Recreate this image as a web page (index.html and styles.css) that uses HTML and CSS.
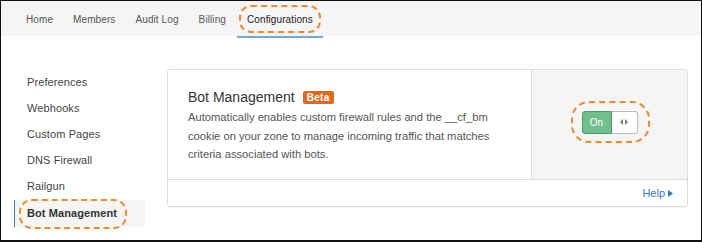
FILE: index.html
```html
<!DOCTYPE html>
<html lang="en">
<head>
  <meta charset="UTF-8">
  <title>Configurations</title>
  <link rel="stylesheet" href="styles.css">
</head>
<body>
  <div class="frame">
    <div class="tabs">
      <a class="tab">Home</a>
      <a class="tab">Members</a>
      <a class="tab">Audit Log</a>
      <a class="tab">Billing</a>
      <a class="tab active">Configurations<span class="callout callout-tab"></span></a>
    </div>

    <div class="main">
      <ul class="sidebar">
        <li>Preferences</li>
        <li>Webhooks</li>
        <li>Custom Pages</li>
        <li>DNS Firewall</li>
        <li>Railgun</li>
        <li class="active">Bot Management<span class="callout callout-side"></span></li>
      </ul>

      <div class="card">
        <div class="card-body">
          <div class="card-text">
            <h2>Bot Management <span class="badge">Beta</span></h2>
            <p>Automatically enables custom firewall rules and the __cf_bm cookie on your zone to manage incoming traffic that matches criteria associated with bots.</p>
          </div>
          <div class="card-control">
            <div class="toggle">
              <span class="toggle-on">On</span>
              <span class="toggle-off">
                <svg width="8" height="6" viewBox="0 0 8 6"><path d="M3 0 L0 3 L3 6 Z M5 0 L8 3 L5 6 Z" fill="#777"/></svg>
              </span>
              <span class="callout callout-toggle"></span>
            </div>
          </div>
        </div>
        <div class="card-footer">
          <a class="help">Help <svg width="5" height="7" viewBox="0 0 5 7"><path d="M0 0 L5 3.5 L0 7 Z" fill="#2f7bbf"/></svg></a>
        </div>
      </div>
    </div>
  </div>
</body>
</html>
```

FILE: styles.css
```css
/* page */
body {
  margin: 0;
  font-family: "Liberation Sans", Arial, sans-serif;
  color: #404040;
}

.frame {
  width: 702px;
  height: 242px;
  box-sizing: border-box;
  border: 1px solid #111;
  border-bottom-width: 2px;
  background: #fff;
  overflow: hidden;
}

/* top tabs */
.tabs {
  display: flex;
  height: 35px;
  padding-left: 15px;
  background-color: #f5f5f5;
}

.tab {
  position: relative;
  display: flex;
  align-items: center;
  padding: 2px 10px 0;
  font-size: 10px;
  letter-spacing: 0.1px;
  color: #555;
}

.tab.active {
  color: #222;
  margin-left: 1px;
}

.tab.active::after {
  content: "";
  position: absolute;
  left: 0;
  right: 0;
  bottom: -2px;
  height: 2px;
  background-color: #78a7d3;
}

/* dashed annotation outlines */
.callout {
  position: absolute;
  border: 2px dashed #f08a2a;
  border-radius: 12px;
  pointer-events: none;
}

.callout-tab {
  left: 2px;
  right: 2px;
  top: 4px;
  bottom: 3px;
}

.callout-side {
  left: 4px;
  top: -1px;
  width: 104px;
  bottom: -2px;
  border-radius: 13px;
}

.callout-toggle {
  left: -11px;
  right: -12px;
  top: -10px;
  bottom: -9px;
  border-radius: 18px;
}

/* layout */
.main {
  display: flex;
  padding: 33px 0 0 13px;
}

.sidebar {
  list-style: none;
  margin: 0;
  padding: 0;
  width: 131px;
  margin-right: 22px;
}

.sidebar li {
  position: relative;
  height: 26px;
  line-height: 26px;
  padding-left: 13px;
  font-size: 11px;
  letter-spacing: 0.1px;
  color: #444;
}

.sidebar li.active {
  height: 27px;
  line-height: 27px;
  margin-top: 1px;
  padding-left: 12px;
  border-left: 1px solid #3d7fc0;
  background-color: #f5f5f5;
  font-weight: bold;
  color: #333;
}

/* card */
.card {
  width: 519px;
  border: 1px solid #ddd;
  border-radius: 3px;
  box-shadow: 0 1px 1px rgba(0, 0, 0, 0.05);
  align-self: flex-start;
}

.card-body {
  display: flex;
  height: 109px;
  border-bottom: 1px solid #ddd;
}

.card-text {
  flex: 1;
  padding: 19px 20px 0 20px;
}

.card-text h2 {
  margin: 0 0 3px;
  font-size: 14px;
  font-weight: normal;
  color: #333;
  display: flex;
  align-items: center;
}

.badge {
  margin-left: 8px;
  padding: 1px 4px;
  border-radius: 2px;
  background-color: #e06a17;
  color: #fff;
  font-size: 10px;
  font-weight: bold;
  letter-spacing: 0.3px;
}

.card-text p {
  margin: 0;
  font-size: 11.2px;
  line-height: 18.5px;
  color: #555;
}

.card-control {
  width: 155px;
  border-left: 1px solid #ddd;
  background-color: #f5f5f5;
  display: flex;
  justify-content: center;
  align-items: center;
  padding-bottom: 5px;
}

.toggle {
  position: relative;
  display: flex;
  height: 23px;
}

.toggle-on {
  width: 28px;
  display: flex;
  align-items: center;
  justify-content: center;
  background-color: #6fc08c;
  border: 1px solid #4f9c6a;
  border-radius: 3px 0 0 3px;
  color: #fff;
  font-size: 10px;
}

.toggle-off {
  width: 25px;
  display: flex;
  align-items: center;
  justify-content: center;
  background-color: #fff;
  border: 1px solid #bbb;
  border-left: none;
  border-radius: 0 3px 3px 0;
}

.card-footer {
  height: 26px;
  display: flex;
  justify-content: flex-end;
  align-items: center;
  padding-right: 14px;
}

.help {
  font-size: 11px;
  color: #2f7bbf;
  display: flex;
  align-items: center;
  gap: 3px;
}
```
